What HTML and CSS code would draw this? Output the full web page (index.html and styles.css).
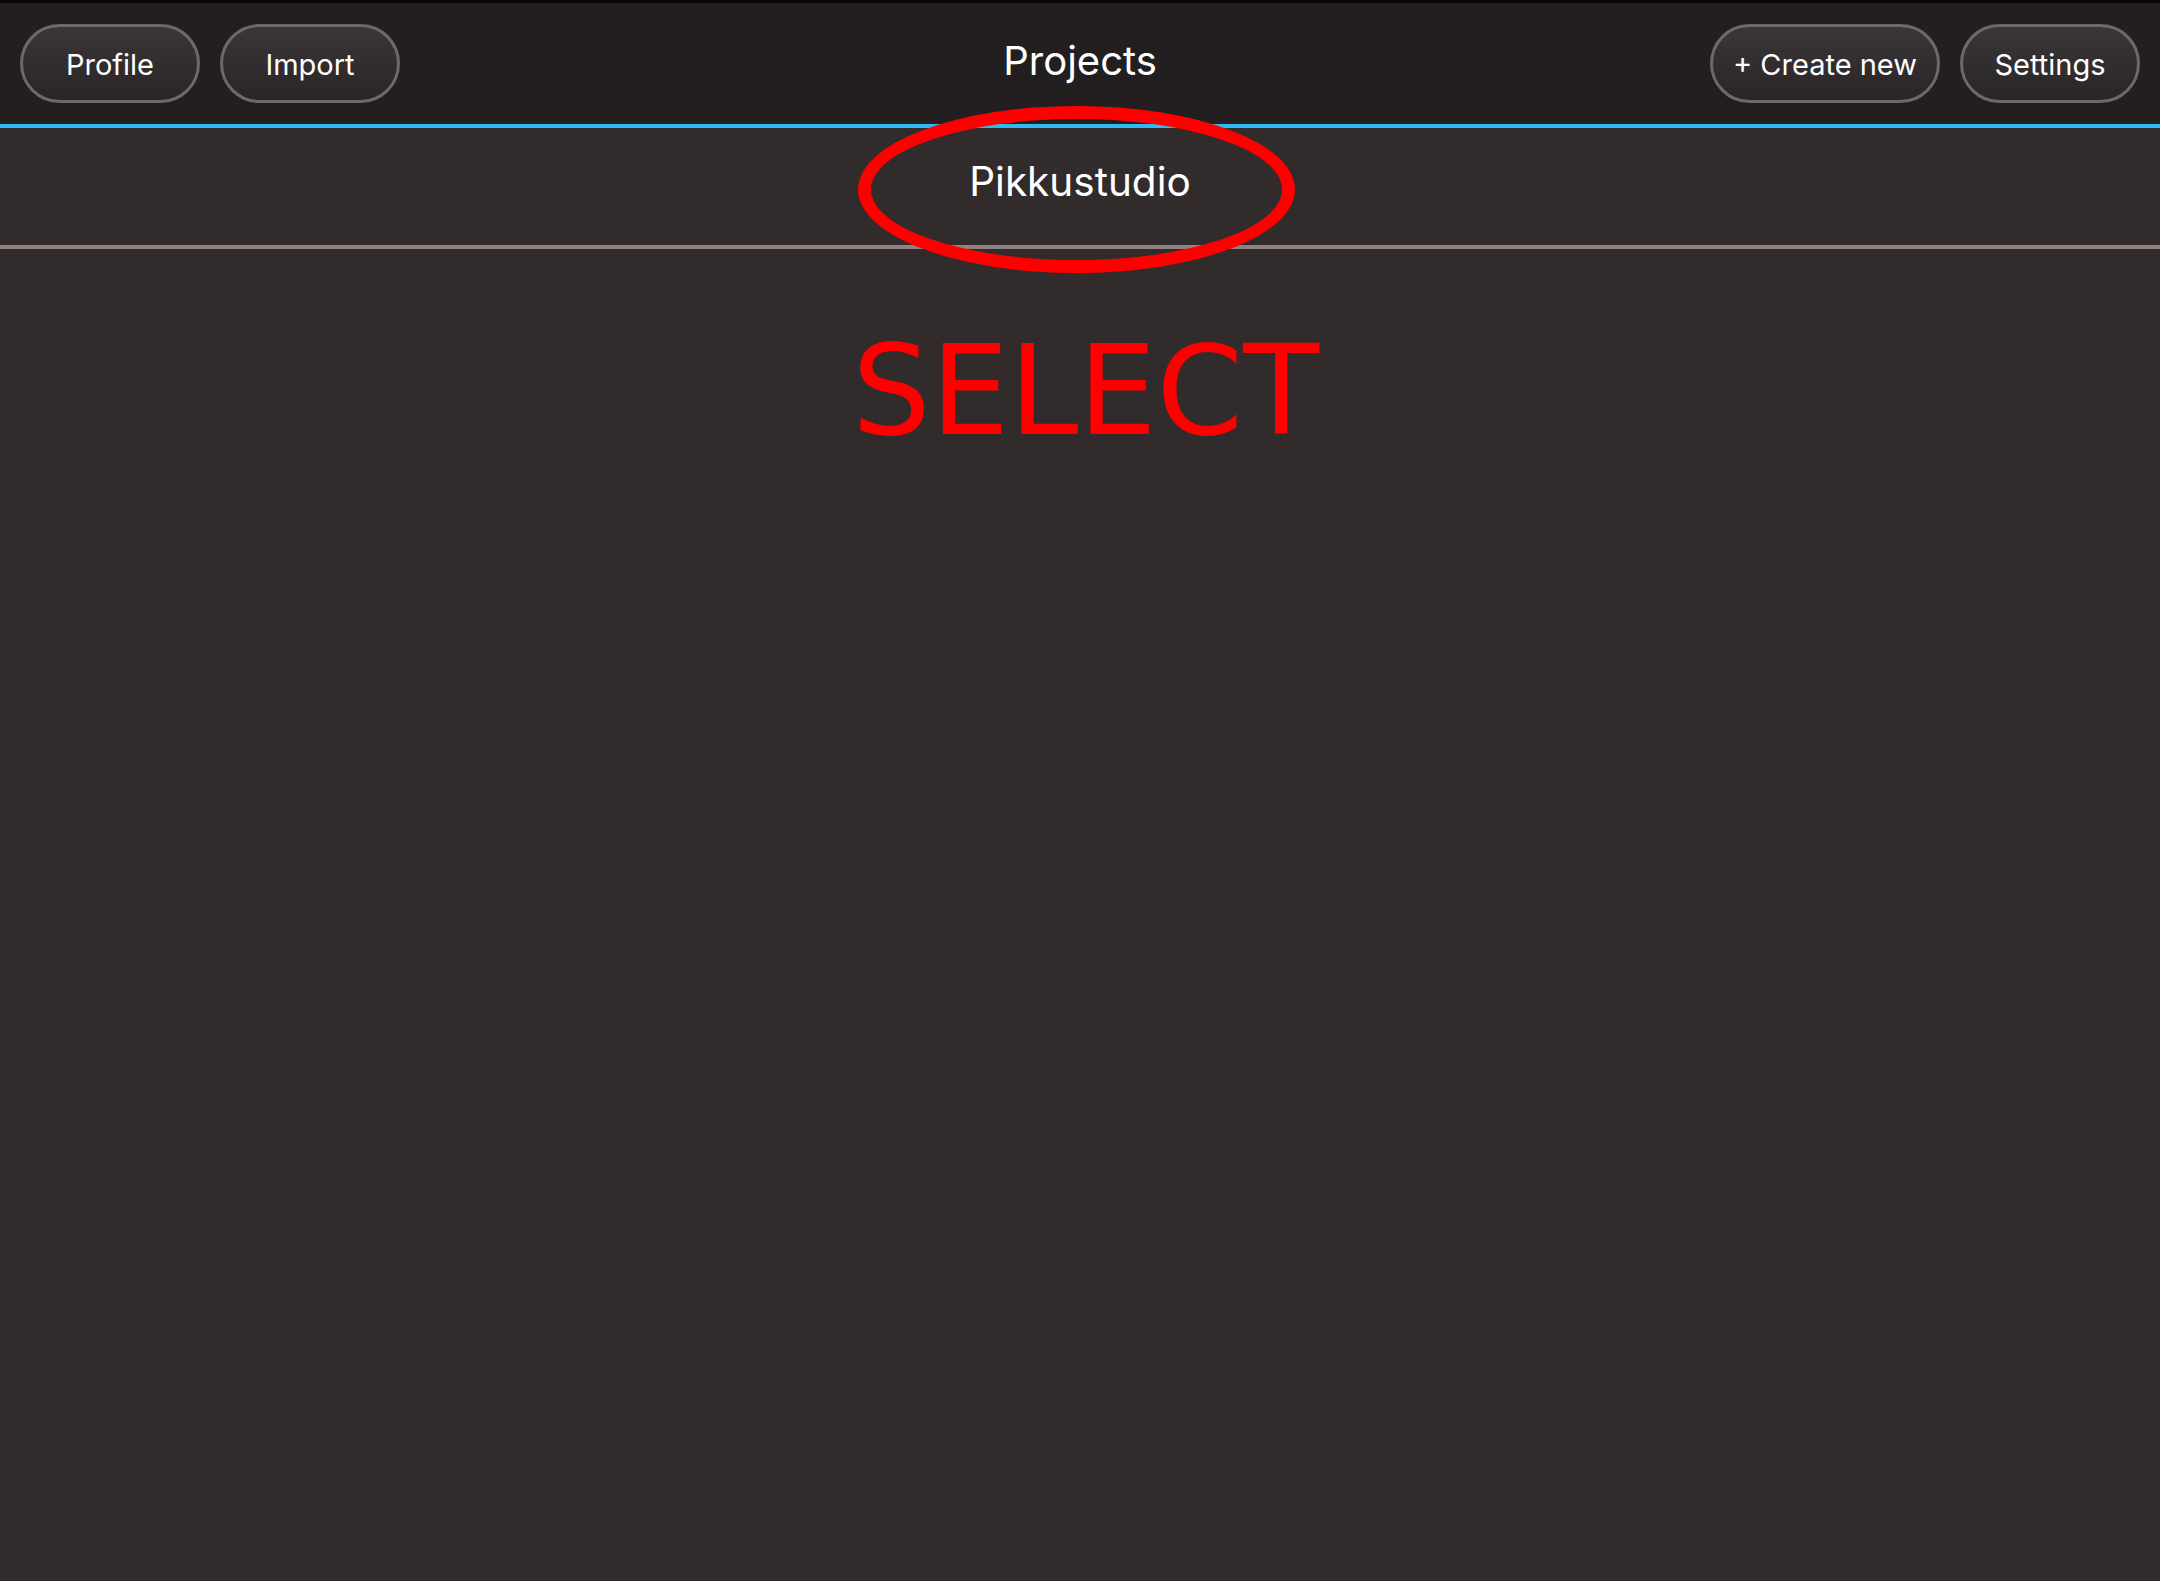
FILE: index.html
```html
<!DOCTYPE html>
<html>
<head>
<meta charset="utf-8">
<link rel="stylesheet" href="styles.css">
</head>
<body>
<div class="app">
  <header class="topbar">
    <div class="group">
      <button class="btn btn-profile">Profile</button>
      <button class="btn btn-import">Import</button>
    </div>
    <h1 class="title">Projects</h1>
    <div class="group group-right">
      <button class="btn btn-create">+ Create new</button>
      <button class="btn btn-settings">Settings</button>
    </div>
  </header>
  <div class="project-row">
    <span class="project-name">Pikkustudio</span>
    <div class="circle"></div>
  </div>
  <main class="content">
    <div class="select">SELECT</div>
  </main>
</div>
</body>
</html>
```

FILE: styles.css
```css
* { box-sizing: border-box; }
html, body { margin: 0; padding: 0; }
body {
  background: #312b2b;
  font-family: Inter, "Noto Sans", sans-serif;
  color: #fff;
  width: 2160px;
  height: 1581px;
  overflow: hidden;
}
.app { display: flex; flex-direction: column; height: 100%; }
.topbar {
  position: relative;
  display: flex;
  justify-content: space-between;
  align-items: flex-start;
  height: 128px;
  padding: 21px 20px 0;
  background: #231f21;
  border-top: 3px solid #050505;
  border-bottom: 4px solid #2fb8f2;
}
.group { display: flex; gap: 20px; }
.btn {
  height: 79px;
  width: 180px;
  border: 3px solid #6b696a;
  border-radius: 40px;
  background: linear-gradient(#3a3537, #2a2628);
  color: #fff;
  font-family: Inter, "Noto Sans", sans-serif;
  font-size: 29px;
  padding: 0 0 0 0;
  padding-top: 2px;
  display: flex;
  align-items: center;
  justify-content: center;
}
.btn-create { width: 230px; }
.title {
  position: absolute;
  left: 0; right: 0;
  top: 28px;
  margin: 0;
  text-align: center;
  font-weight: 400;
  font-size: 40px;
  line-height: 60px;
  pointer-events: none;
}
.project-row {
  position: relative;
  height: 121px;
  display: flex;
  justify-content: center;
  padding-top: 22px;
  border-bottom: 4px solid #8e8283;
}
.project-name {
  font-size: 40.5px;
  line-height: 64px;
  height: 64px;
}
.circle {
  position: absolute;
  left: 858px;
  top: -22px;
  width: 437px;
  height: 167px;
  border: 13px solid #ff0000;
  border-radius: 50%;
}
.content { flex: 1; display: flex; justify-content: center; }
.select {
  margin-top: 67px;
  padding-left: 11px;
  font-family: "DejaVu Sans", sans-serif;
  font-size: 124px;
  line-height: 150px;
  color: #ff0000;
}
```
